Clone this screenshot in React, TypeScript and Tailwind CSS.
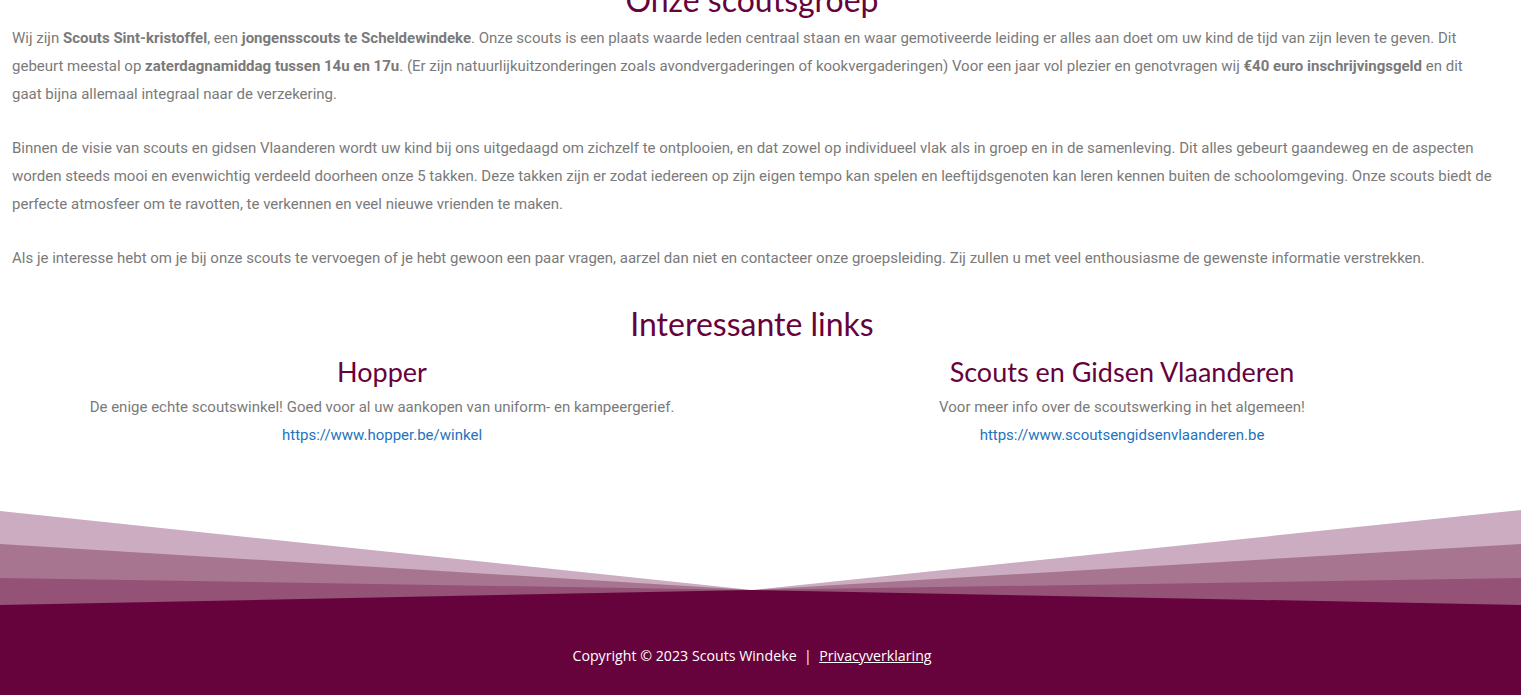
import React from 'react';

const body = "font-['Roboto',sans-serif] text-[15px] leading-[28px] text-[#7a7a7a]";
const head = "font-['Lato',sans-serif] text-[#66033c] font-normal";

const links = [
  { title: "Hopper", desc: "De enige echte scoutswinkel! Goed voor al uw aankopen van uniform- en kampeergerief.", url: "https://www.hopper.be/winkel" },
  { title: "Scouts en Gidsen Vlaanderen", desc: "Voor meer info over de scoutswerking in het algemeen!", url: "https://www.scoutsengidsenvlaanderen.be" },
];

// fan shaped divider above the footer
function FanDivider() {
  return (
    <svg viewBox="0 0 1521 110" preserveAspectRatio="none" className="block w-full h-[110px]">
      <rect x="0" y="0" width="1521" height="110" fill="#66033c" />
      <polygon points="0,0 1521,0 1521,104 752,89 0,104" fill="#945277" />
      <polygon points="0,0 1521,0 1521,77 752,89 0,77" fill="#a87590" />
      <polygon points="0,0 1521,0 1521,43 752,89 0,43" fill="#ccacc0" />
      <polygon points="0,0 1521,0 1521,9 752,89 0,10" fill="#ffffff" />
    </svg>
  );
}

export default function App() {
  return (
    <div className="w-[1521px] h-[695px] overflow-hidden bg-white">
      <div className="w-[1504px] px-3">
        {/* Onze scoutsgroep */}
        <h2 className={`${head} text-[32px] leading-[36px] text-center -mt-[18px] mb-[6px]`}>Onze scoutsgroep</h2>
        <div className={body}>
          <p className="mb-[26px]">
            Wij zijn <b>Scouts Sint-kristoffel</b>, een <b>jongensscouts te Scheldewindeke</b>. Onze scouts is een plaats waarde leden centraal staan en waar gemotiveerde leiding er alles aan doet om uw kind de tijd van zijn leven te geven. Dit gebeurt meestal op <b>zaterdagnamiddag tussen 14u en 17u</b>. (Er zijn natuurlijkuitzonderingen zoals avondvergaderingen of kookvergaderingen) Voor een jaar vol plezier en genotvragen wij <b>€40 euro inschrijvingsgeld</b> en dit gaat bijna allemaal integraal naar de verzekering.
          </p>
          <p className="mb-[26px]">
            Binnen de visie van scouts en gidsen Vlaanderen wordt uw kind bij ons uitgedaagd om zichzelf te ontplooien, en dat zowel op individueel vlak als in groep en in de samenleving. Dit alles gebeurt gaandeweg en de aspecten worden steeds mooi en evenwichtig verdeeld doorheen onze 5 takken. Deze takken zijn er zodat iedereen op zijn eigen tempo kan spelen en leeftijdsgenoten kan leren kennen buiten de schoolomgeving. Onze scouts biedt de perfecte atmosfeer om te ravotten, te verkennen en veel nieuwe vrienden te maken.
          </p>
          <p>
            Als je interesse hebt om je bij onze scouts te vervoegen of je hebt gewoon een paar vragen, aarzel dan niet en contacteer onze groepsleiding. Zij zullen u met veel enthousiasme de gewenste informatie verstrekken.
          </p>
        </div>

        {/* Interessante links */}
        <h2 className={`${head} text-[32px] leading-[36px] text-center mt-[34px]`}>Interessante links</h2>
        <div className="grid grid-cols-2 mt-[14px]">
          {links.map((l) => (
            <div key={l.title} className="text-center">
              <h3 className={`${head} text-[27px] leading-[32px]`}>{l.title}</h3>
              <p className={`${body} mt-[5px]`}>{l.desc}</p>
              <a href={l.url} className="font-['Roboto',sans-serif] text-[15px] leading-[28px] text-[#1e73be]">{l.url}</a>
            </div>
          ))}
        </div>
      </div>

      <div className="mt-[52px]">
        <FanDivider />
        <footer className="bg-[#66033c] h-[100px] w-[1521px]">
          <div className="w-[1504px] pt-[34px] text-center font-['Open_Sans',sans-serif] text-[14.2px] text-white">
            Copyright © 2023 Scouts Windeke &nbsp;|&nbsp; <a href="#" className="underline">Privacyverklaring</a>
          </div>
        </footer>
      </div>
    </div>
  );
}
